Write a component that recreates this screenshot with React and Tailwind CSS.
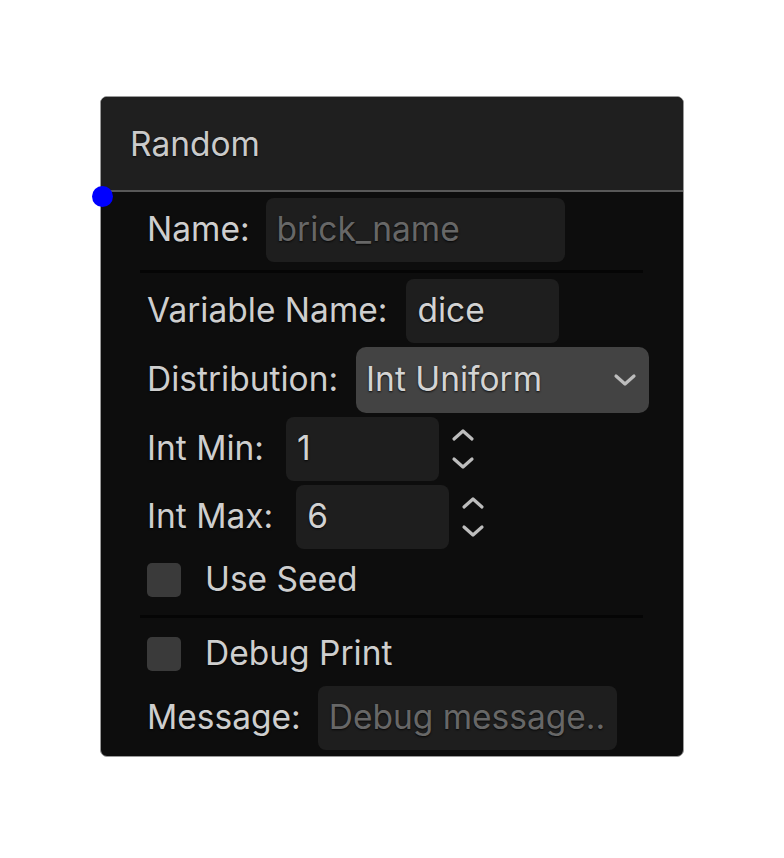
import React from "react";

const font = { fontFamily: "Inter, 'Noto Sans', sans-serif" };

function Chevron({ dir = "down", className = "" }) {
  const d = dir === "down" ? "M3 3 L12 11 L21 3" : "M3 11 L12 3 L21 11";
  return (
    <svg width="24" height="14" viewBox="0 0 24 14" className={className}>
      <path d={d} fill="none" stroke="#bdbdbd" strokeWidth="3.2" strokeLinecap="round" strokeLinejoin="round" />
    </svg>
  );
}

function Spinner() {
  return (
    <div className="flex flex-col items-center gap-[14px] ml-[12px]">
      <Chevron dir="up" />
      <Chevron dir="down" />
    </div>
  );
}

function Field({ label, width, value, placeholder, spinner, gap }) {
  return (
    <div className="flex items-center h-[64px]">
      <span className="text-[#cecece]">{label}</span>
      <div
        className="h-[64px] rounded-[8px] bg-[#1e1e1e] flex items-center px-[11px]"
        style={{ width, marginLeft: gap }}
      >
        {value ? (
          <span className="text-[#d2d2d2]">{value}</span>
        ) : (
          <span className="text-[#676767]">{placeholder}</span>
        )}
      </div>
      {spinner && <Spinner />}
    </div>
  );
}

function Check({ label }) {
  return (
    <div className="flex items-center gap-[24px]">
      <div className="w-[34px] h-[34px] rounded-[5px] bg-[#3a3a3a]" />
      <span className="text-[#cecece]">{label}</span>
    </div>
  );
}

function Separator() {
  return <div className="h-[3px] bg-[#050505] mr-[40px] ml-[-7px]" />;
}

export default function App() {
  return (
    <div className="w-[784px] h-[858px] bg-white pt-[96px] pl-[100px]" style={font}>
      <div className="relative w-[584px] h-[661px] rounded-[7px] border border-[#9a9a9a] bg-[#0d0d0d] text-[33.5px] leading-none [text-shadow:0_1px_2px_rgba(0,0,0,0.8)]">
        <div className="h-[95px] rounded-t-[6px] bg-[#1f1f1f] border-b-2 border-[#585858] flex items-center pl-[29px] pt-[3px]">
          <span className="text-[#cacaca]">Random</span>
        </div>
        <div className="absolute left-[-9px] top-[89px] w-[21px] h-[21px] rounded-full bg-[#0000ff]" />
        <div className="pl-[46px] pt-[6px] flex flex-col">
          <Field label="Name:" width={299} placeholder="brick_name" gap={16} />
          <div className="mt-[8px] mb-[6px]">
            <Separator />
          </div>
          <div className="flex flex-col gap-[4px]">
            <Field label="Variable Name:" width={153} value="dice" gap={19} />
            <div className="flex items-center h-[66px]">
              <span className="text-[#cecece] mr-[18px]">Distribution:</span>
              <div className="w-[293px] h-[66px] rounded-[10px] bg-[#434343] flex items-center justify-between pl-[10px] pr-[12px]">
                <span className="text-[#d4d4d4]">Int Uniform</span>
                <Chevron dir="down" />
              </div>
            </div>
            <Field label="Int Min:" width={153} value="1" spinner gap={22} />
            <Field label="Int Max:" width={153} value="6" spinner gap={23} />
          </div>
          <div className="h-[62px] flex items-center">
            <Check label="Use Seed" />
          </div>
          <div className="mt-[4px]">
            <Separator />
          </div>
          <div className="h-[64px] flex items-center mt-[4px]">
            <Check label="Debug Print" />
          </div>
          <Field label="Message:" width={299} placeholder="Debug message.." gap={17} />
        </div>
      </div>
    </div>
  );
}
